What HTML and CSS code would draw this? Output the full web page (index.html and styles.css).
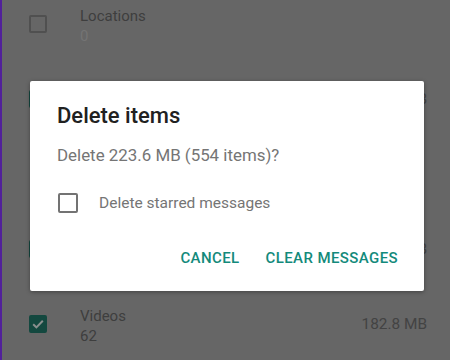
FILE: index.html
```html
<!DOCTYPE html>
<html>
<head>
<meta charset="utf-8">
<link rel="stylesheet" href="styles.css">
</head>
<body>
<div class="screen">
  <div class="edge"></div>
  <div class="list">
    <div class="row">
      <span class="cb"></span>
      <div class="info"><div class="name">Locations</div><div class="count faint">0</div></div>
    </div>
    <div class="row">
      <span class="cb checked"><svg viewBox="0 0 18 18" width="18" height="18"><path d="M4.2 9.2l3.2 3.2 6.4-6.6" fill="none" stroke="#8a8f8e" stroke-width="2"/></svg></span>
      <div class="size">31.2 MB</div>
    </div>
    <div class="row"></div>
    <div class="row">
      <span class="cb checked"><svg viewBox="0 0 18 18" width="18" height="18"><path d="M4.2 9.2l3.2 3.2 6.4-6.6" fill="none" stroke="#8a8f8e" stroke-width="2"/></svg></span>
      <div class="size">9.6 MB</div>
    </div>
    <div class="row">
      <span class="cb checked"><svg viewBox="0 0 18 18" width="18" height="18"><path d="M4.2 9.2l3.2 3.2 6.4-6.6" fill="none" stroke="#8a8f8e" stroke-width="2"/></svg></span>
      <div class="info"><div class="name">Videos</div><div class="count">62</div></div>
      <div class="size">182.8 MB</div>
    </div>
  </div>

  <div class="dialog">
    <div class="title">Delete items</div>
    <div class="body">Delete 223.6 MB (554 items)?</div>
    <div class="option">
      <span class="box"></span>
      <span class="label">Delete starred messages</span>
    </div>
    <div class="actions">
      <span class="btn">CANCEL</span>
      <span class="btn">CLEAR MESSAGES</span>
    </div>
  </div>
</div>
</body>
</html>
```

FILE: styles.css
```css
* { box-sizing: border-box; }
html, body { margin: 0; padding: 0; }
body {
  font-family: Roboto, "Noto Sans", "Liberation Sans", sans-serif;
  background: #666666;
}
.screen {
  position: relative;
  width: 450px;
  height: 360px;
  overflow: hidden;
  background: #666666;
}
.edge {
  position: absolute;
  left: 0; top: 0;
  width: 2px; height: 360px;
  background: #51209a;
}
.list {
  margin-top: -14px;
  display: flex;
  flex-direction: column;
}
.row {
  position: relative;
  height: 75px;
  display: flex;
  align-items: center;
  padding: 0 23px 0 29px;
}
.cb {
  width: 18px; height: 18px;
  border: 2px solid #505050;
  border-radius: 2px;
  flex: none;
  position: relative;
}
.cb.checked {
  background: #13483f;
  border-color: #13483f;
}
.cb svg { position: absolute; left: -2px; top: -2px; }
.info {
  margin-left: 33px;
  padding-top: 4px;
}
.name, .count {
  font-size: 15px;
  line-height: 20px;
  color: #3e3e3e;
  height: 20px;
}
.count.faint { color: #747474; }
.size {
  margin-left: auto;
  font-size: 15.4px;
  color: #434343;
}

.dialog {
  position: absolute;
  left: 30px; top: 81px;
  width: 394px; height: 210px;
  background: #ffffff;
  border-radius: 2px;
  box-shadow: 0 1px 4px rgba(0,0,0,0.35);
  display: flex;
  flex-direction: column;
  padding: 21px 26px 0 27px;
}
.title {
  font-size: 22px;
  font-weight: 500;
  line-height: 28px;
  color: #212121;
}
.body {
  margin-top: 15px;
  font-size: 16.9px;
  line-height: 20px;
  color: #757575;
}
.option {
  margin-top: 26px;
  height: 24px;
  display: flex;
  align-items: center;
}
.box {
  width: 20px; height: 20px;
  margin-left: 1px;
  border: 2px solid #737373;
  border-radius: 2px;
}
.label {
  margin-left: 21px;
  font-size: 15.5px;
  line-height: 20px;
  color: #757575;
}
.actions {
  margin-top: 33px;
  display: flex;
  justify-content: flex-end;
  gap: 26px;
}
.btn {
  font-size: 15px;
  font-weight: 500;
  line-height: 20px;
  letter-spacing: 0.4px;
  color: #138a7b;
}
```
